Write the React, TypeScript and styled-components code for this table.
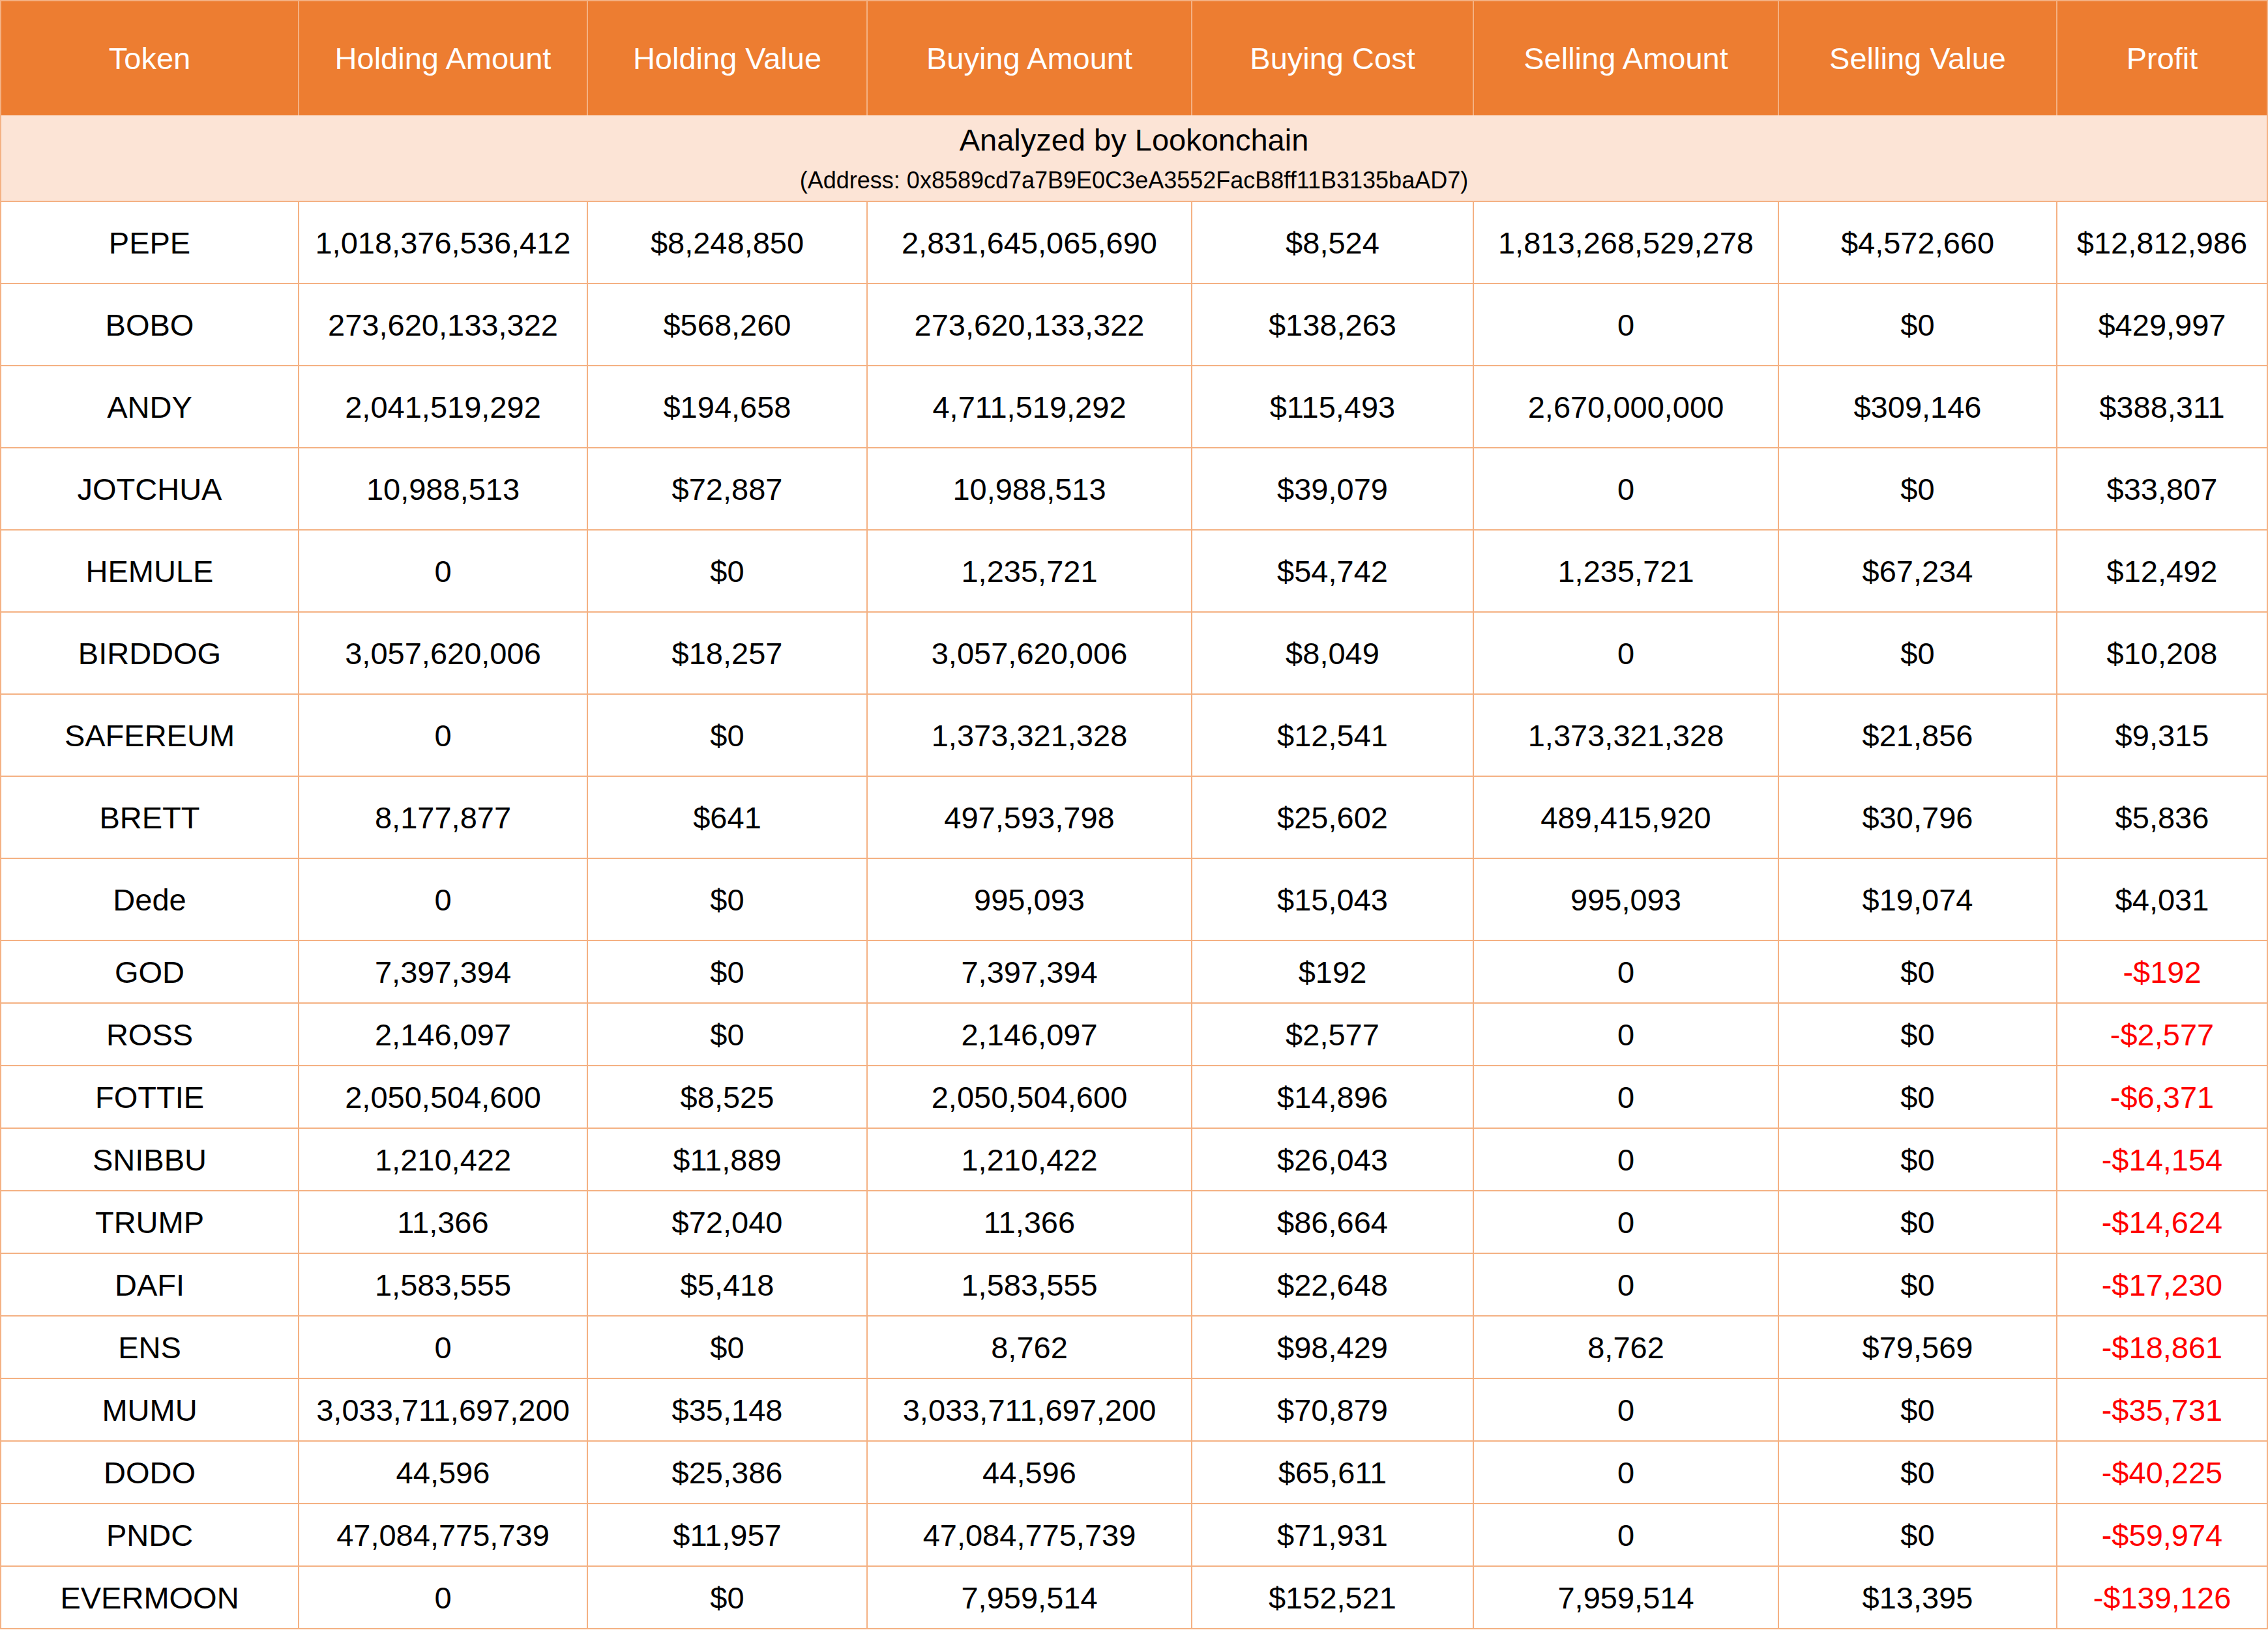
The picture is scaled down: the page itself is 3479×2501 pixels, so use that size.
import { FC } from 'react'
import styled, { createGlobalStyle } from 'styled-components'

const GlobalStyle = createGlobalStyle`
    html, body {
        margin: 0;
        padding: 0;
        background: #ffffff;
    }
    body {
        font-family: "Liberation Sans", Arial, sans-serif;
    }
`

const LINE = '#F4B183'

const Table = styled.table`
    width: 3479px;
    table-layout: fixed;
    border-collapse: collapse;
    border: 2px solid ${LINE};
    font-family: "Liberation Sans", Arial, sans-serif;
    font-size: 47px;
    color: #000000;
`

const HeadCell = styled.th`
    height: 175px;
    padding: 0;
    background: #ED7D31;
    color: #ffffff;
    font-weight: 400;
    text-align: center;
    border-left: 2px solid ${LINE};
    border-right: 2px solid ${LINE};
    border-top: 2px solid ${LINE};
`

const BannerCell = styled.td`
    height: 131px;
    padding: 0;
    background: #FCE4D6;
    border: 2px solid ${LINE};
    border-top: none;
`

const Banner = styled.div`
    display: flex;
    flex-direction: column;
    align-items: center;
    justify-content: center;
    gap: 14px;
`

const Title = styled.div`
    font-size: 47px;
    line-height: 54px;
`

const Address = styled.div`
    font-size: 36px;
    line-height: 41px;
`

const Cell = styled.td<{ $tall: boolean; $loss?: boolean }>`
    height: ${p => (p.$tall ? 124 : 94)}px;
    padding: 0;
    text-align: center;
    vertical-align: middle;
    border: 2px solid ${LINE};
    color: ${p => (p.$loss ? '#FF0000' : '#000000')};
    white-space: nowrap;
`

const widths = [457, 443, 429, 498, 432, 468, 427, 323]

const headers = [
    'Token',
    'Holding Amount',
    'Holding Value',
    'Buying Amount',
    'Buying Cost',
    'Selling Amount',
    'Selling Value',
    'Profit',
]

const rows: string[][] = [
    ['PEPE', '1,018,376,536,412', '$8,248,850', '2,831,645,065,690', '$8,524', '1,813,268,529,278', '$4,572,660', '$12,812,986'],
    ['BOBO', '273,620,133,322', '$568,260', '273,620,133,322', '$138,263', '0', '$0', '$429,997'],
    ['ANDY', '2,041,519,292', '$194,658', '4,711,519,292', '$115,493', '2,670,000,000', '$309,146', '$388,311'],
    ['JOTCHUA', '10,988,513', '$72,887', '10,988,513', '$39,079', '0', '$0', '$33,807'],
    ['HEMULE', '0', '$0', '1,235,721', '$54,742', '1,235,721', '$67,234', '$12,492'],
    ['BIRDDOG', '3,057,620,006', '$18,257', '3,057,620,006', '$8,049', '0', '$0', '$10,208'],
    ['SAFEREUM', '0', '$0', '1,373,321,328', '$12,541', '1,373,321,328', '$21,856', '$9,315'],
    ['BRETT', '8,177,877', '$641', '497,593,798', '$25,602', '489,415,920', '$30,796', '$5,836'],
    ['Dede', '0', '$0', '995,093', '$15,043', '995,093', '$19,074', '$4,031'],
    ['GOD', '7,397,394', '$0', '7,397,394', '$192', '0', '$0', '-$192'],
    ['ROSS', '2,146,097', '$0', '2,146,097', '$2,577', '0', '$0', '-$2,577'],
    ['FOTTIE', '2,050,504,600', '$8,525', '2,050,504,600', '$14,896', '0', '$0', '-$6,371'],
    ['SNIBBU', '1,210,422', '$11,889', '1,210,422', '$26,043', '0', '$0', '-$14,154'],
    ['TRUMP', '11,366', '$72,040', '11,366', '$86,664', '0', '$0', '-$14,624'],
    ['DAFI', '1,583,555', '$5,418', '1,583,555', '$22,648', '0', '$0', '-$17,230'],
    ['ENS', '0', '$0', '8,762', '$98,429', '8,762', '$79,569', '-$18,861'],
    ['MUMU', '3,033,711,697,200', '$35,148', '3,033,711,697,200', '$70,879', '0', '$0', '-$35,731'],
    ['DODO', '44,596', '$25,386', '44,596', '$65,611', '0', '$0', '-$40,225'],
    ['PNDC', '47,084,775,739', '$11,957', '47,084,775,739', '$71,931', '0', '$0', '-$59,974'],
    ['EVERMOON', '0', '$0', '7,959,514', '$152,521', '7,959,514', '$13,395', '-$139,126'],
]

const App: FC = () => {
    return (
        <>
            <GlobalStyle />
            <Table>
                <colgroup>
                    {widths.map((w, i) => (
                        <col key={i} style={{ width: w }} />
                    ))}
                </colgroup>
                <thead>
                    <tr>
                        {headers.map(h => (
                            <HeadCell key={h}>{h}</HeadCell>
                        ))}
                    </tr>
                </thead>
                <tbody>
                    <tr>
                        <BannerCell colSpan={8}>
                            <Banner>
                                <Title>Analyzed by Lookonchain</Title>
                                <Address>(Address: 0x8589cd7a7B9E0C3eA3552FacB8ff11B3135baAD7)</Address>
                            </Banner>
                        </BannerCell>
                    </tr>
                    {rows.map((row, r) => (
                        <tr key={row[0]}>
                            {row.map((value, c) => (
                                <Cell
                                    key={c}
                                    $tall={r < 9}
                                    $loss={c === 7 && value.startsWith('-')}
                                >
                                    {value}
                                </Cell>
                            ))}
                        </tr>
                    ))}
                </tbody>
            </Table>
        </>
    )
}

export default App
